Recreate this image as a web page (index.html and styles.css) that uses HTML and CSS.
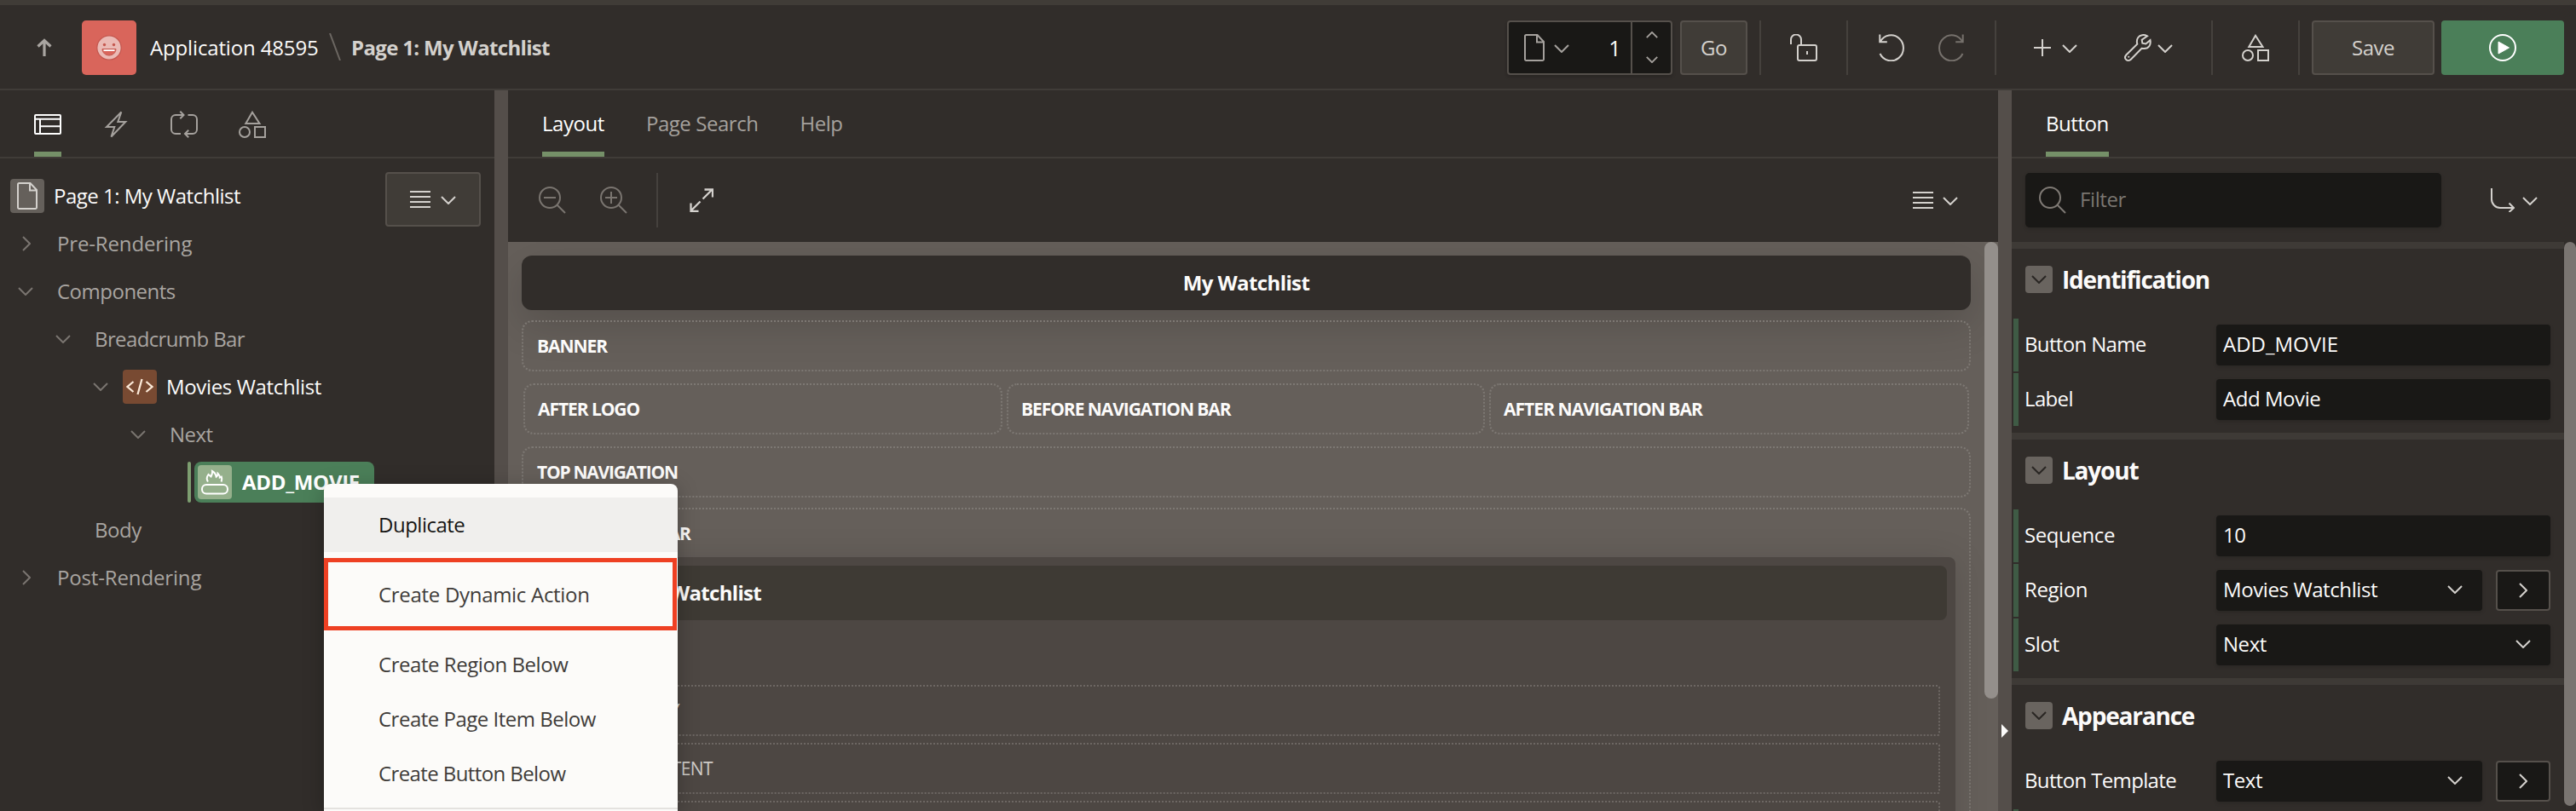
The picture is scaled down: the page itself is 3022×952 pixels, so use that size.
FILE: index.html
```
<!DOCTYPE html>
<html lang="en">
<head>
<meta charset="utf-8">
<title>Page Designer</title>
<link rel="stylesheet" href="styles.css">
</head>
<body>
<svg class="sprite" aria-hidden="true">
  <symbol id="up" viewBox="0 0 20 22"><path d="M10 21V3M2.5 9.5 10 2.5l7.5 7" stroke-width="3.2"/></symbol>
  <symbol id="layout" viewBox="0 0 32 32"><rect x="1" y="5" width="30" height="22" rx="1"/><path d="M1 9.7h30M7 9.7V27M7 18.3h24"/></symbol>
  <symbol id="bolt" viewBox="0 0 32 32"><path d="M22.3 1.5 5 19h9.3L10.5 30.5 27.3 13h-9z"/></symbol>
  <symbol id="cycle" viewBox="0 0 32 32"><path d="M12 27H6a5 5 0 0 1-5-5V10a5 5 0 0 1 5-5h9.5M11.3.8 15.5 5l-4.2 4.2M20.500 5H26a5 5 0 0 1 5 5v12a5 5 0 0 1-5 5h-9M21.200 22.800 17 27l4.200 4.200"/></symbol>
  <symbol id="shapes" viewBox="0 0 32 32"><path d="M16 1.800 8.300 15h16.200z"/><circle cx="7" cy="25" r="6"/><rect x="19" y="19" width="12" height="12"/></symbol>
  <symbol id="doc" viewBox="0 0 24 32"><path d="M3 1h12.500L23 9v20.500a1.500 1.500 0 0 1-1.500 1.500h-19A1.500 1.500 0 0 1 1 29.500v-27A1.500 1.500 0 0 1 2.500 1zM15 1v8.500h8"/></symbol>
  <symbol id="down" viewBox="0 0 18 10"><path d="m1 1 8 8 8-8"/></symbol>
  <symbol id="lines" viewBox="0 0 24 20"><path d="M0 1h24M0 7h24M0 13h24M0 19h24"/></symbol>
  <symbol id="lock" viewBox="0 0 32 32"><path d="M1 12V6.500a6 6 0 0 1 12 0V13M20 20v4"/><rect x="9" y="13" width="22" height="18" rx="2"/></symbol>
  <symbol id="undo" viewBox="0 0 32 32"><path d="M1.300.5v8.700h8.500M1.800 9A14.500 15 0 1 1 1.500 23"/></symbol>
  <symbol id="plus" viewBox="0 0 20 20"><path d="M10 0v20M0 10h20"/></symbol>
  <symbol id="wrench" viewBox="0 0 32 32"><path d="M27 2.300C23 .2 18.500 1 16.300 4c-1.600 2.200-1.700 5-1 7.800L2.300 24.500c-1.700 2-1.400 4.300 0 5.500 1.500 1.400 4 1.300 5.500-.2L20.500 16.800c4 .8 7.300-.2 9-2.800 1.300-2 1.500-4.300 1-6.800l-5.200 4.300-4-.8-.6-3.900z"/><path d="M5.200 26.800h.1" stroke-linecap="round"/></symbol>
  <symbol id="play" viewBox="0 0 32 32"><circle cx="16" cy="16" r="15"/><path d="m11 9 12.500 7L11 23z" fill="currentColor" stroke-width="1"/></symbol>
  <symbol id="search" viewBox="0 0 32 32"><circle cx="13" cy="13" r="12"/><path d="M21.500 21.500 31 31"/></symbol>
  <symbol id="minus-glass" viewBox="0 0 32 32"><circle cx="13" cy="13" r="12"/><path d="M21.500 21.500 31 31M6 13h14"/></symbol>
  <symbol id="plus-glass" viewBox="0 0 32 32"><circle cx="13" cy="13" r="12"/><path d="M21.500 21.500 31 31M6 13h14M13 6v14"/></symbol>
  <symbol id="expand" viewBox="0 0 28 28"><path d="M15.500 12.500 26 2M17.500 1.500H27v9M12.500 15.500 2 26M1.500 17.500V27h9"/></symbol>
  <symbol id="jump" viewBox="0 0 28 28"><path d="M1 0v13a10 10 0 0 0 10 10h16M21.500 17.500 27 23l-5.500 5"/></symbol>
  <symbol id="code" viewBox="0 0 32 20"><path d="M8.500 4 1.500 10l7 6M23.500 4l7 6-7 6M18.500 1l-5 18"/></symbol>
  <symbol id="button" viewBox="0 0 40 40"><rect x="5" y="23" width="30" height="10.500" rx="5"/><path d="M12 19.500c-2-3-1.500-6 .500-8.500l3 2.500c1-2 2-4 1.500-6.500 3 1.300 4 3.500 4.700 6.800 1.300-.9 1.800-2.200 1.800-4 2 2 2.300 3.300 2.300 4.700l2-.8c.6 2 .5 4-.3 5.800"/></symbol>
  <symbol id="slash" viewBox="0 0 14 32"><path d="M1 0l12 32"/></symbol>
</svg>

<header class="topbar">
  <svg class="i up"><use href="#up"/></svg>
  <span class="app-icon">
    <svg viewBox="0 0 30 30" width="30" height="30"><circle cx="15" cy="15" r="14.200" fill="#ebbab5" stroke="#c4574e" stroke-width="1.200"/><circle cx="9.500" cy="11.500" r="1.700" fill="#c4574e"/><circle cx="20.500" cy="11.500" r="1.700" fill="#c4574e"/><path d="M7 16.500h16c0 4.500-4 7.500-8 7.500s-8-3-8-7.500z" fill="#d9655b" stroke="#c4574e"/><path d="M8.500 17.200h13v1.800h-13z" fill="#fff"/></svg>
  </span>
  <span class="app-name wide">Application 48595</span>
  <svg class="i slash"><use href="#slash"/></svg>
  <span class="crumb">Page 1: My Watchlist</span>
  <div class="tools">
    <div class="page-select">
      <span class="page-pick"><svg class="i doc"><use href="#doc"/></svg><svg class="i chev"><use href="#down"/></svg><b>1</b></span>
      <span class="spin"><svg class="i flip"><use href="#down"/></svg><svg class="i"><use href="#down"/></svg></span>
    </div>
    <button class="btn go">Go</button>
    <i class="sep s1"></i>
    <svg class="i i32 lock"><use href="#lock"/></svg>
    <i class="sep s2"></i>
    <svg class="i i32 undo"><use href="#undo"/></svg>
    <svg class="i i32 redo"><use href="#undo"/></svg>
    <i class="sep s3"></i>
    <svg class="i plus"><use href="#plus"/></svg><svg class="i chev"><use href="#down"/></svg>
    <svg class="i i32 wrench"><use href="#wrench"/></svg><svg class="i chev c2"><use href="#down"/></svg>
    <i class="sep s4"></i>
    <svg class="i i32 shp"><use href="#shapes"/></svg>
    <i class="sep s5"></i>
    <button class="btn save">Save</button>
    <button class="btn run"><svg class="i i32"><use href="#play"/></svg></button>
  </div>
</header>

<main class="panes">
  <section class="left">
    <nav class="tabs icon-tabs">
      <span class="tab on"><svg class="i i32"><use href="#layout"/></svg></span>
      <span class="tab"><svg class="i i32"><use href="#bolt"/></svg></span>
      <span class="tab"><svg class="i i32"><use href="#cycle"/></svg></span>
      <span class="tab"><svg class="i i32"><use href="#shapes"/></svg></span>
    </nav>
    <div class="tree-head">
      <span class="node-icon page"><svg class="i doc"><use href="#doc"/></svg></span>
      <span class="page-title">Page 1: My Watchlist</span>
      <button class="btn menu-btn"><svg class="i lines"><use href="#lines"/></svg><svg class="i chev"><use href="#down"/></svg></button>
    </div>
    <ul class="tree">
      <li class="d0 wide"><svg class="i tw shut"><use href="#down"/></svg>Pre-Rendering</li>
      <li class="d0"><svg class="i tw"><use href="#down"/></svg>Components</li>
      <li class="d1 narrow"><svg class="i tw"><use href="#down"/></svg>Breadcrumb Bar</li>
      <li class="d2 lit"><svg class="i tw"><use href="#down"/></svg><span class="node-icon region"><svg class="i code"><use href="#code"/></svg></span>Movies Watchlist</li>
      <li class="d3"><svg class="i tw"><use href="#down"/></svg>Next</li>
      <li class="sel-row"><i></i><span class="sel"><span class="node-icon button"><svg class="i b40"><use href="#button"/></svg></span>ADD_MOVIE</span></li>
      <li class="d1"><span class="tw"></span>Body</li>
      <li class="d0 wide"><svg class="i tw shut"><use href="#down"/></svg>Post-Rendering</li>
    </ul>
  </section>
  <div class="splitter"></div>

  <section class="center">
    <nav class="tabs text-tabs">
      <span class="tab on">Layout</span><span class="tab">Page Search</span><span class="tab">Help</span>
    </nav>
    <div class="toolbar">
      <svg class="i i32 dim"><use href="#minus-glass"/></svg>
      <svg class="i i32 dim zin"><use href="#plus-glass"/></svg>
      <i class="sep"></i>
      <svg class="i expand"><use href="#expand"/></svg>
      <svg class="i lines"><use href="#lines"/></svg><svg class="i chev"><use href="#down"/></svg>
    </div>
    <div class="canvas">
      <div class="regions">
        <div class="page-bar">My Watchlist</div>
        <div class="slot">BANNER</div>
        <div class="thirds"><div class="slot">AFTER LOGO</div><div class="slot">BEFORE NAVIGATION BAR</div><div class="slot">AFTER NAVIGATION BAR</div></div>
        <div class="slot topnav">TOP NAVIGATION</div>
        <div class="slot big">
          <div class="slot-name">BREADCRUMB BAR</div>
          <div class="region-box">
            <div class="region-title"><span>Movies Watchlist</span></div>
            <div class="sub first"><span class="s-y">REGION BODY</span></div>
            <div class="sub"><span class="s-c">SUB CONTENT</span></div>
            <div class="sub"></div>
          </div>
        </div>
      </div>
      <div class="track"><div class="thumb"></div></div>
    </div>
  </section>
  <div class="splitter"><i class="grip"></i></div>

  <section class="right">
    <nav class="tabs prop-tabs"><span class="tab on">Button</span></nav>
    <div class="filter-row">
      <div class="filter"><svg class="i i32"><use href="#search"/></svg><span>Filter</span></div>
      <svg class="i jump"><use href="#jump"/></svg><svg class="i chev"><use href="#down"/></svg>
    </div>
    <div class="props">
      <div class="groups">
        <div class="group">
          <h2><span class="tog"><svg class="i chev"><use href="#down"/></svg></span>Identification</h2>
          <div class="prop"><label>Button Name</label><div class="field wide">ADD_MOVIE</div></div>
          <div class="prop"><label>Label</label><div class="field">Add Movie</div></div>
        </div>
        <div class="group">
          <h2><span class="tog"><svg class="i chev"><use href="#down"/></svg></span>Layout</h2>
          <div class="prop"><label class="mid">Sequence</label><div class="field">10</div></div>
          <div class="prop"><label class="mid">Region</label><div class="field mid">Movies Watchlist<svg class="i chev"><use href="#down"/></svg></div><span class="go-to"><svg class="i"><use href="#down"/></svg></span></div>
          <div class="prop"><label class="mid">Slot</label><div class="field">Next<svg class="i chev"><use href="#down"/></svg></div></div>
        </div>
        <div class="group">
          <h2><span class="tog"><svg class="i chev"><use href="#down"/></svg></span>Appearance</h2>
          <div class="prop plain"><label>Button Template</label><div class="field">Text<svg class="i chev"><use href="#down"/></svg></div><span class="go-to"><svg class="i"><use href="#down"/></svg></span></div>
          <div class="prop"></div>
        </div>
      </div>
      <div class="track"><div class="thumb"></div></div>
    </div>
  </section>
</main>

<div class="context-menu">
  <div class="item hover">Duplicate</div>
  <div class="item boxed">Create Dynamic Action</div>
  <div class="item after">Create Region Below</div>
  <div class="item tight">Create Page Item Below</div>
  <div class="item tighter">Create Button Below</div>
  <hr>
</div>
</body>
</html>
```
FILE: styles.css
```
* { box-sizing: border-box; }
body {
  margin: 0; width: 3022px; height: 952px; overflow: hidden;
  display: flex; flex-direction: column;
  background: #312d2a; color: #fcfbfa;
  font: 24px/1.2 "Open Sans", "Noto Sans", sans-serif; letter-spacing: -.5px;
}
.sprite { position: absolute; width: 0; height: 0; }
.i { display: block; flex: none; fill: none; stroke: currentColor; stroke-width: 2; color: #d4d1cd; }
.i32 { width: 32px; height: 32px; }
.chev { width: 18px; height: 10px; }
.lines { width: 24px; height: 20px; }
.doc { width: 24px; height: 32px; }
.sep { display: block; width: 2px; height: 64px; background: #45413d; flex: none; }
.wide { letter-spacing: -.15px; }
.narrow { letter-spacing: -.62px; }

.topbar { height: 106px; flex: none; border-top: 6px solid #403c37; border-bottom: 2px solid #403c38; display: flex; align-items: center; padding: 2px 14px 0 42px; }
.up { width: 20px; height: 22px; color: #a9a5a1; }
.app-icon { margin-left: 34px; width: 64px; height: 64px; border-radius: 5px; background: #d9655b; display: grid; place-items: center; }
.app-name { margin-left: 16px; width: 198px; white-space: nowrap; }
.slash { width: 14px; height: 32px; margin-left: 12px; margin-top: -3px; color: #6c6762; }
.crumb { margin-left: 12px; font-weight: 700; color: #d4d1cd; letter-spacing: -.66px; }
.tools { margin-left: auto; display: flex; align-items: center; }
.page-select { width: 194px; height: 64px; display: flex; background: #191816; border: 2px solid #55504b; border-radius: 4px; box-shadow: 0 2px 4px rgba(0,0,0,.2); }
.page-pick { flex: 1; display: flex; align-items: center; padding: 0 12px 0 18px; }
.page-pick .i { color: #a5a19d; }
.page-pick .chev { margin-left: 11px; margin-top: 2px; }
.page-pick b { margin-left: auto; font-weight: 500; font-size: 25px; }
.spin { width: 47px; border-left: 2px solid #55504b; display: flex; flex-direction: column; align-items: center; justify-content: space-between; padding: 11px 0 12px; }
.spin .i { width: 14px; height: 8px; stroke-width: 2.4; color: #a5a19d; }
.flip { transform: scaleY(-1); }
.btn { font: inherit; letter-spacing: inherit; color: #d4d1cd; background: #403c37; border: 2px solid #55504b; border-radius: 4px; height: 64px; padding: 0; display: flex; align-items: center; justify-content: center; flex: none; }
.go { width: 79px; margin-left: 9px; }
.s1 { margin-left: 14px; }
.lock { margin-left: 34px; }
.s2 { margin-left: 34px; }
.undo { margin-left: 36px; }
.redo { margin-left: 36px; transform: scaleX(-1); color: #76716c; }
.s3 { margin-left: 36px; }
.plus { width: 20px; height: 20px; margin-left: 44px; }
.plus + .chev { margin-left: 13px; }
.tools > .chev { margin-top: 2px; }
.wrench { margin-left: 55px; }
.c2 { margin-left: 7px; }
.s4 { margin-left: 45px; }
.shp { margin-left: 34px; }
.s5 { margin-left: 34px; }
.save { width: 144px; margin-left: 14px; }
.run { width: 144px; margin-left: 8px; background: #4b7f59; border: 0; }
.run .i { color: #fff; }

.panes { flex: 1; min-height: 0; display: flex; }
.left { width: 580px; flex: none; }
.splitter { width: 16px; flex: none; background: #544e4a; position: relative; }
.grip { position: absolute; left: 4px; top: 744px; border: solid transparent; border-width: 8px 0 8px 8px; border-left-color: #fcfbfa; }
.center { width: 1748px; flex: none; display: flex; flex-direction: column; }
.right { flex: 1; display: flex; flex-direction: column; min-width: 0; }

.tabs { height: 80px; flex: none; border-bottom: 2px solid #403c38; display: flex; padding-left: 40px; }
.tab { height: 78px; display: flex; align-items: center; color: #a5a19d; border-bottom: 6px solid transparent; padding-top: 7px; letter-spacing: -.45px; }
.tab.on { color: #fff; border-bottom-color: #759068; }
.tab .i { color: inherit; }
.icon-tabs .tab { padding-top: 8px; }
.icon-tabs { gap: 48px; }
.text-tabs { gap: 49px; }

.tree-head { height: 72px; margin-top: 16px; display: flex; align-items: flex-start; padding: 0 16px 0 12px; }
.node-icon { width: 40px; height: 40px; flex: none; border-radius: 4px; display: grid; place-items: center; }
.page { background: #65605b; margin-top: 8px; }
.page-title { margin: 14px 0 0 11px; letter-spacing: -.5px; }
.menu-btn { margin-left: auto; width: 112px; gap: 12px; }
.menu-btn .chev { margin-top: 2px; }
.tree { list-style: none; margin: -16px 0 0; padding: 0; color: #a9a5a1; }
.tree li { height: 56px; display: flex; align-items: center; }
.tw { width: 18px; height: 10px; flex: none; color: #7a7570; margin-right: 28px; }
.tree .shut { transform: rotate(-90deg) translateY(1px); }
.d0 { padding-left: 21px; }
.d1 { padding-left: 65px; }
.d2 { padding-left: 109px; }
.d3 { padding-left: 153px; }
.d2 .tw { margin-right: 17px; }
.lit { color: #fcfbfa; letter-spacing: -.35px; }
.region { background: #784a32; margin-right: 11px; }
.code { width: 32px; height: 20px; color: #fbe9d8; stroke-width: 2.300; }
.sel-row { padding-left: 220px; }
.sel-row > i { width: 4px; height: 48px; border-radius: 2px; background: #7d9e70; margin-right: 4px; }
.sel { width: 211px; height: 48px; border-radius: 8px; background: #4b7f59; color: #fff; font-weight: 700; display: flex; align-items: center; padding-left: 4px; letter-spacing: -.3px; }
.button { background: #95b08c; margin-right: 12px; }
.b40 { width: 40px; height: 40px; color: #fff; }

.toolbar { height: 98px; flex: none; display: flex; align-items: center; padding: 0 47px 0 36px; }
.dim { color: #7a7570; }
.zin { margin-left: 40px; }
.toolbar .sep { margin-left: 34px; }
.expand { width: 28px; height: 28px; margin-left: 37px; stroke-width: 2.300; }
.toolbar .lines { margin-left: auto; }
.toolbar .chev { margin-left: 11px; margin-top: 2px; }
.canvas { flex: 1; min-height: 0; background: #655f5a; display: flex; overflow: hidden; }
.regions { width: 1732px; padding: 16px 16px 0; display: flex; flex-direction: column; flex: none; }
.page-bar { height: 64px; flex: none; border-radius: 12px; background: #312d2a; display: grid; place-items: center; font-weight: 700; letter-spacing: -.6px; margin-bottom: 12px; box-shadow: 0 16px 48px rgba(0,0,0,.16); }
.slot { height: 60px; flex: none; border: 2px dotted #7d7873; border-radius: 12px; padding: 1px 0 0 16px; display: flex; align-items: center; font-size: 21px; font-weight: 700; letter-spacing: -1.060px; }
.thirds { display: grid; grid-template-columns: 562px 561px 563px; gap: 5px; margin: 14px 2px; flex: none; }
.thirds .slot { padding-left: 15px; }
.thirds .slot:last-child { letter-spacing: -.95px; }
.topnav { letter-spacing: -1.250px; }
.big { display: block; height: 500px; padding: 0 16px; margin-top: 12px; }
.slot-name { height: 56px; line-height: 57px; }
.region-box { background: #4d4743; border-radius: 8px; height: 460px; padding: 10px; box-shadow: 0 4px 40px rgba(0,0,0,.14); }
.region-title { height: 64px; border-radius: 8px; background: #3e3a34; margin-bottom: 76px; font-size: 24px; letter-spacing: -.7px; display: flex; align-items: center; padding-left: 57px; }
.region-title span, .sub span { display: block; width: 196px; text-align: right; }
.sub { height: 60px; border: 2px dotted #6d6763; border-radius: 3px; margin: 0 8px 8px; padding-top: 1px; display: flex; align-items: center; font-weight: 400; letter-spacing: -.6px; color: #cfccc8; }
.sub .s-y { width: 147px; }
.sub .s-c { width: 186px; }
.track { width: 16px; flex: none; }
.canvas .thumb { height: 536px; border-radius: 8px; background: #948f8b; }

.prop-tabs { padding-left: 40px; }
.filter-row { height: 98px; flex: none; display: flex; align-items: center; padding-left: 16px; }
.filter { width: 488px; height: 64px; border-radius: 5px; background: #191816; display: flex; align-items: center; padding-left: 16px; gap: 16px; color: #7a7671; box-shadow: 0 2px 4px rgba(0,0,0,.15); letter-spacing: -.4px; }
.filter span { margin-top: -2px; }
.filter .i { color: #7f7a75; }
.jump { width: 28px; height: 28px; margin-left: 58px; }
.jump + .chev { margin-left: 9px; margin-top: 2px; }
.props { flex: 1; min-height: 0; display: flex; overflow: hidden; }
.groups { width: 648px; flex: none; }
.props .track { width: 14px; }
.props .thumb { height: 662px; border-radius: 7px; background: #7a7571; }
.group { border-top: 8px solid #3e3a36; padding-bottom: 8px; }
.group h2 { margin: 0; height: 80px; padding: 0 0 7px 16px; display: flex; align-items: center; font-size: 28px; font-weight: 700; letter-spacing: -1.200px; }
.tog { width: 32px; height: 32px; border-radius: 4px; background: #69645f; display: grid; place-items: center; margin: -1px 11px 0 0; }
.tog .i { color: #292623; }
.prop { height: 62px; margin: 2px 0 0 2px; border-left: 6px solid #3f5b45; display: flex; align-items: center; padding: 0 16px 0 7px; letter-spacing: -.45px; }
.plain { border-left-color: transparent; }
.prop label { width: 225px; flex: none; letter-spacing: -.65px; margin-top: -2px; }
.prop .mid { letter-spacing: -.4px; }
.field { flex: 1; height: 48px; border-radius: 4px; background: #191816; padding: 0 23px 2px 8px; display: flex; align-items: center; box-shadow: 0 2px 4px rgba(0,0,0,.15); }
.field.wide { letter-spacing: 0; }
.field .i { margin-left: auto; }
.go-to { width: 64px; height: 48px; margin-left: 16px; border: 2px solid #55504b; border-radius: 4px; background: #191816; display: grid; place-items: center; }
.go-to .i { width: 18px; height: 10px; transform: rotate(-90deg); }

.context-menu { position: absolute; left: 380px; top: 568px; width: 415px; height: 384px; background: #fcfbf9; border-radius: 8px 8px 0 0; padding-top: 16px; color: #403c39; box-shadow: 0 4px 24px rgba(0,0,0,.25); }
.item { height: 64px; display: flex; align-items: center; padding-left: 64px; letter-spacing: -.36px; }
.item.hover { background: #f0efed; color: #161513; letter-spacing: -.5px; }
.item.boxed { height: 85px; width: 414px; margin-top: 7px; border: 5px solid #ee4023; padding: 1px 0 0 59px; letter-spacing: -.3px; }
.item.after { margin-top: 8px; letter-spacing: -.45px; }
.item.tight { letter-spacing: -.5px; }
.item.tighter { letter-spacing: -.6px; }
.context-menu hr { margin: 8px 0 0; border: 0; height: 2px; background: #e4e2df; }
```
